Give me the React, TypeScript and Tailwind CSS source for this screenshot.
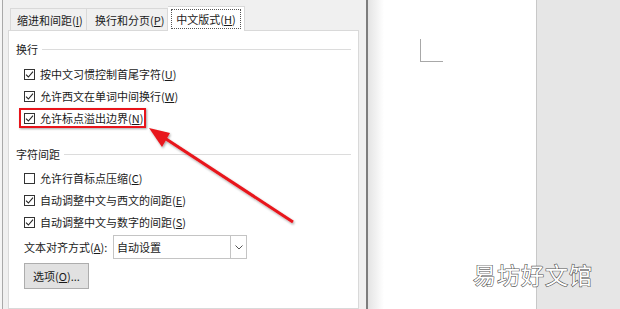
import React from 'react';

const font = { fontFamily: '"Noto Sans CJK SC", "Liberation Sans", sans-serif' };

function Key({ k }: { k: string }) {
  return (
    <>
      (<span className="underline underline-offset-[1px]">{k}</span>)
    </>
  );
}

function Checkbox({ checked }: { checked: boolean }) {
  return (
    <span className="w-[11px] h-[11px] border border-[#333] bg-white flex items-center justify-center shrink-0">
      {checked && (
        <svg width="9" height="9" viewBox="0 0 9 9">
          <path d="M1 4.6 L3.4 7 L8 1.6" fill="none" stroke="#222" strokeWidth="1.1" />
        </svg>
      )}
    </span>
  );
}

function Row({ checked, label, k, children }: { checked: boolean; label: string; k: string; children?: React.ReactNode }) {
  return (
    <div className="relative h-[22px] flex items-center gap-[5px] ml-[8px]">
      <Checkbox checked={checked} />
      <span className="text-[11px] text-[#1a1a1a] leading-none">
        {label}
        <Key k={k} />
      </span>
      {children}
    </div>
  );
}

function GroupHead({ title }: { title: string }) {
  return (
    <div className="h-[16px] flex items-center gap-[4px]">
      <span className="text-[11px] text-[#1a1a1a] leading-none">{title}</span>
      <div className="flex-1 h-px bg-[#dcdcdc]" />
    </div>
  );
}

export default function App() {
  return (
    <div className="relative w-[620px] h-[309px] flex overflow-hidden bg-[#e6e6e6]" style={font}>
      {/* ── DIALOG ── */}
      <div className="w-[2px] bg-[#f5f5f5]" />
      <div className="w-[1px] bg-[#a9a9a9]" />
      <div className="w-[363px] bg-[#f0f0f0] flex flex-col pl-[5px] pr-[7px] pt-[6px]">
        {/* Tabs */}
        <div className="h-[25px] flex items-end pl-[2px] relative z-10 -mb-px">
          <div className="w-[77px] h-[23px] border border-b-0 border-[#d9d9d9] flex items-center pl-[6px] text-[11px] text-[#1a1a1a]">
            缩进和间距<Key k="I" />
          </div>
          <div className="w-[81px] h-[23px] border border-b-0 border-l-0 border-[#d9d9d9] flex items-center pl-[8px] text-[11px] text-[#1a1a1a]">
            换行和分页<Key k="P" />
          </div>
          <div className="w-[77px] h-[25px] border border-b-0 border-l-0 border-[#d9d9d9] bg-white flex items-center justify-center text-[11px] text-[#1a1a1a]">
            <span className="border border-dotted border-[#555] px-[4px] h-[20px] flex items-center">
              中文版式<Key k="H" />
            </span>
          </div>
        </div>

        {/* Panel */}
        <div className="flex-1 border border-[#d9d9d9] bg-white px-[7px] pt-[10px] flex flex-col">
          <GroupHead title="换行" />
          <div className="mt-[6px]">
            <Row checked label="按中文习惯控制首尾字符" k="U" />
            <Row checked label="允许西文在单词中间换行" k="W" />
            <Row checked label="允许标点溢出边界" k="N">
              <div className="absolute left-[-5px] top-[1px] w-[127px] h-[20px] border-2 border-[#e8141b] shadow-[1px_1px_2px_rgba(0,0,0,0.35)]" />
            </Row>
          </div>

          <div className="mt-[17px]">
            <GroupHead title="字符间距" />
          </div>
          <div className="mt-[5px]">
            <Row checked={false} label="允许行首标点压缩" k="C" />
            <Row checked label="自动调整中文与西文的间距" k="E" />
            <Row checked label="自动调整中文与数字的间距" k="S" />
          </div>

          <div className="mt-[2px] ml-[8px] h-[24px] flex items-center">
            <span className="w-[89px] text-[11px] text-[#1a1a1a]">
              文本对齐方式<Key k="A" />:
            </span>
            <div className="w-[134px] h-[24px] border border-[#c4c4c4] bg-white flex items-center">
              <span className="flex-1 pl-[3px] text-[11px] text-[#1a1a1a]">自动设置</span>
              <div className="w-[16px] h-full border-l border-[#c4c4c4] flex items-center justify-center">
                <svg width="8" height="5" viewBox="0 0 8 5">
                  <path d="M0.5 0.5 L4 4 L7.5 0.5" fill="none" stroke="#555" strokeWidth="1" />
                </svg>
              </div>
            </div>
          </div>

          <div className="mt-[4px] ml-[8px] w-[65px] h-[26px] bg-[#e1e1e1] border border-[#adadad] flex items-center justify-center text-[11px] text-[#1a1a1a]">
            选项<Key k="O" />...
          </div>
        </div>
      </div>

      {/* ── DOCUMENT ── */}
      <div className="w-[2px] bg-[#7d7d7d]" />
      <div className="w-[168px] bg-white flex">
        <div className="w-[16px] bg-gradient-to-r from-[#e4e4e4] to-white" />
        <div className="pl-[36px] pt-[39px]">
          <div className="w-[23px] h-[23px] border-l border-b border-[#a8a8a8]" />
        </div>
      </div>
      <div className="flex-1 border-l border-[#c8c8c8] bg-[#e6e6e6]" />

      {/* Annotation arrow */}
      <svg className="absolute inset-0 pointer-events-none" width="620" height="309">
        <defs>
          <filter id="sh" x="-20%" y="-20%" width="140%" height="140%">
            <feDropShadow dx="1" dy="1.5" stdDeviation="1.2" floodColor="#000" floodOpacity="0.35" />
          </filter>
        </defs>
        <g filter="url(#sh)">
          <line x1="293" y1="222" x2="160" y2="135" stroke="#e8141b" strokeWidth="3" />
          <polygon points="149,128 170,133 162,147" fill="#e8141b" />
        </g>
      </svg>

      {/* Watermark */}
      <div className="absolute left-[473px] top-[263px] text-[23px] leading-none text-white tracking-[1px] [-webkit-text-stroke:1.2px_#555] [paint-order:stroke_fill]">
        易坊好文馆
      </div>
    </div>
  );
}
